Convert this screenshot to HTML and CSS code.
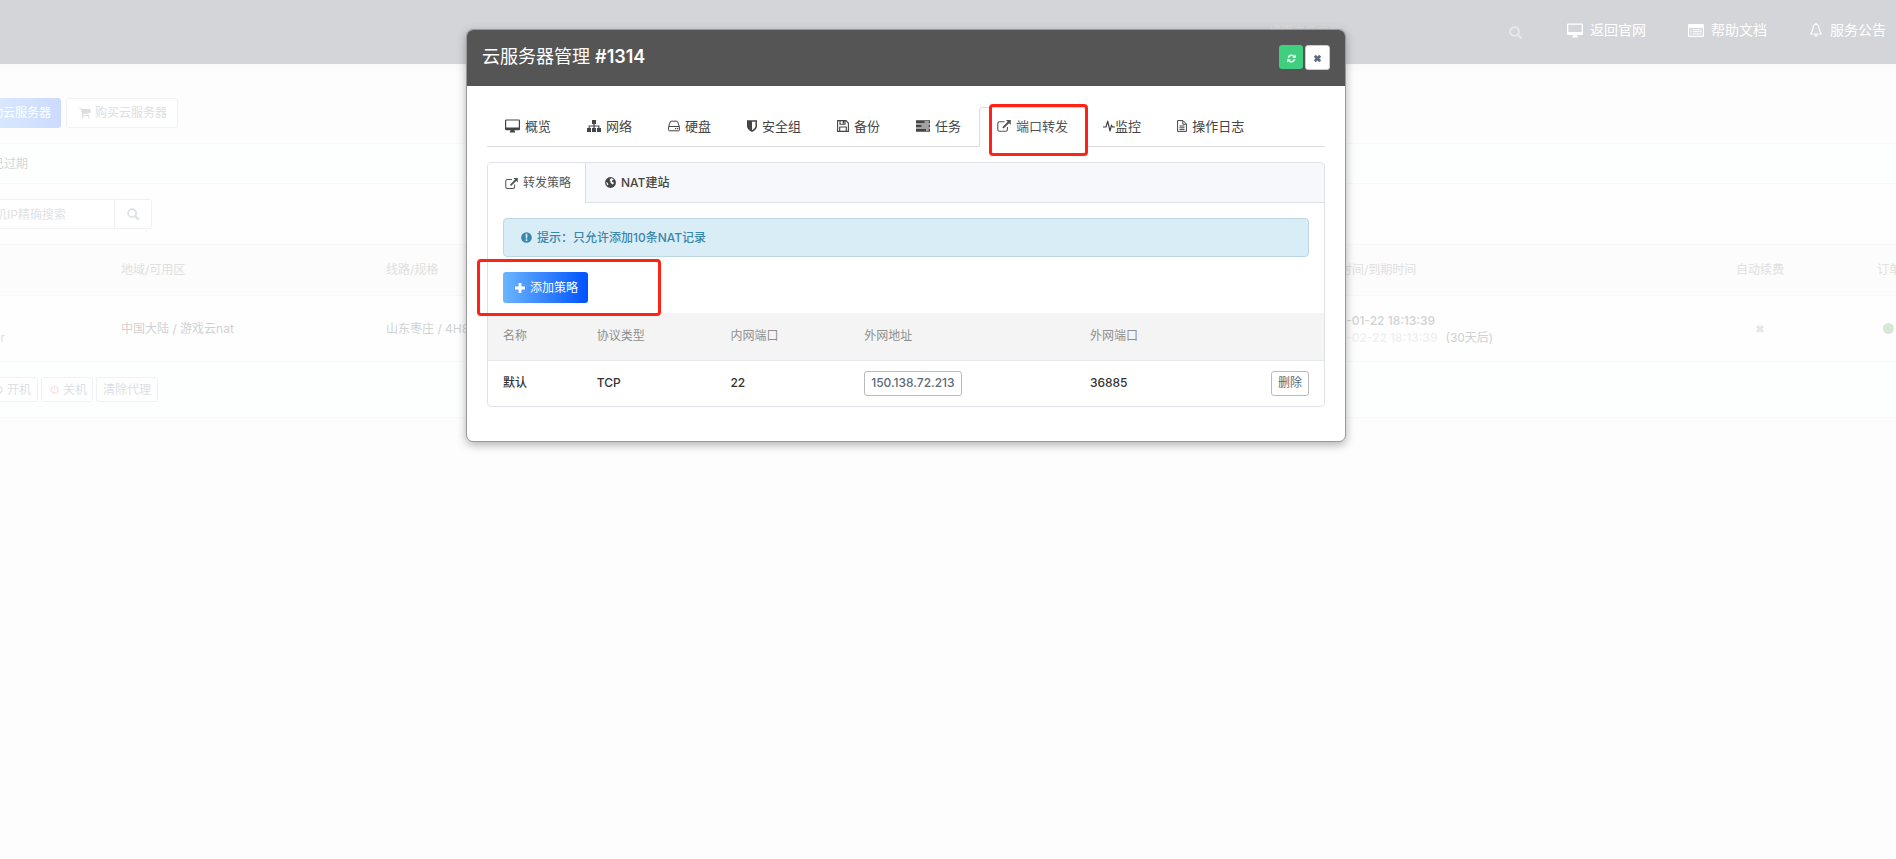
FILE: index.html
```html
<!DOCTYPE html>
<html lang="zh-CN">
<head>
<meta charset="utf-8">
<title>云服务器管理</title>
<link rel="stylesheet" href="styles.css">
</head>
<body>
<svg class="defs" aria-hidden="true">
  <symbol id="i-search" viewBox="0 0 14 14"><circle cx="6" cy="6" r="4.7" fill="none" stroke="currentColor" stroke-width="2"/><path d="M9.3 9.3l3.6 3.6" stroke="currentColor" stroke-width="2.4" stroke-linecap="round"/></symbol>
  <symbol id="i-desktop" viewBox="0 0 16 14"><path fill-rule="evenodd" d="M1.3 0h13.4Q16 0 16 1.3v8.9q0 1.3-1.3 1.3H10q0 .8.8 1.4V14H5.2v-1.100Q6 12.300 6 11.500H1.300Q0 11.500 0 10.200V1.300Q0 0 1.300 0zM1.300 1.200v7.300h13.400V1.200z"/></symbol>
  <symbol id="i-list" viewBox="0 0 16 13"><path fill-rule="evenodd" d="M1.200 0h13.600Q16 0 16 1.200v10.600q0 1.200-1.200 1.200H1.200Q0 13 0 11.800V1.200Q0 0 1.200 0zM1.200 4v7.800h13.600V4z"/><path d="M2.300 5.200h1.200v1H2.300zM4.500 5.200h9.200v1H4.500zM2.300 7.300h1.200v1H2.300zM4.500 7.300h9.200v1H4.500zM2.300 9.400h1.200v1H2.300zM4.500 9.400h9.200v1H4.500z"/></symbol>
  <symbol id="i-bell" viewBox="0 0 14 15"><path d="M7 1.300C4.600 1.600 3.800 3.500 3.800 5.500 3.700 8.500 2.500 10 1 11.800h12C11.500 10 10.300 8.500 10.200 5.500 10.200 3.500 9.400 1.600 7 1.300z" fill="none" stroke="currentColor" stroke-width="1.200" stroke-linejoin="round"/><path d="M5.200 12.500h3.600Q8.500 14.700 7 14.700T5.200 12.500zM6.300 0h1.400v2H6.300z"/></symbol>
  <symbol id="i-cart" viewBox="0 0 13 12"><path d="M0 .5h2.400l.5 1.200H12.500v4.300L4.400 7.200l-.2 1H11.500v1H3L3.300 7 1.900 1.500H0z"/><circle cx="4" cy="10.700" r="1.100"/><circle cx="10.500" cy="10.700" r="1.100"/></symbol>
  <symbol id="i-power" viewBox="0 0 12 12"><path d="M3.300 2.300a4.700 4.700 0 1 0 5.400 0M6 .8v5" fill="none" stroke="currentColor" stroke-width="1.500" stroke-linecap="round"/></symbol>
  <symbol id="i-times" viewBox="0 0 10 10"><path d="M2 2l6 6M8 2L2 8" stroke="currentColor" stroke-width="3"/></symbol>
  <symbol id="i-refresh" viewBox="0 0 12 12"><path d="M1.800 5.200A4.300 4.300 0 0 1 9.500 3.400M10.200 6.800A4.300 4.300 0 0 1 2.500 8.600" fill="none" stroke="currentColor" stroke-width="2"/><path d="M11.600 .6v4.600H7zM.4 11.400V6.800H5z"/></symbol>
  <symbol id="i-sitemap" viewBox="0 0 14 12"><path d="M5 0h4v4H7.600v1.400H12.400V8H14v4h-4V8h1.300V6.500H7.600V8H9v4H5V8h1.400V6.500H2.700V8H4v4H0V8h1.600V5.400H6.400V4H5z"/></symbol>
  <symbol id="i-hdd" viewBox="0 0 12 11"><path d="M.6 6.200L2.300 1.300Q2.500.7 3.200.7h5.600q.7 0 .9.600l1.700 4.900v3.200q0 .9-.9.900h-9q-.9 0-.9-.9zM.8 6h10.400" fill="none" stroke="currentColor" stroke-width="1"/><path d="M7 7.500h1.200v1.200H7zM9 7.500h1.200v1.200H9z"/></symbol>
  <symbol id="i-shield" viewBox="0 0 10 12"><path fill-rule="evenodd" d="M0 .3h10v6Q10 9.500 5 12 0 9.500 0 6.300zM5 1.800v8.500q3.500-1.900 3.500-4V1.800z"/></symbol>
  <symbol id="i-save" viewBox="0 0 12 12"><path d="M.6.600H9L11.400 3v8.400H.6zM2.700 11.200V7h6.600v4.200M3 .8v3.400h5V.8" fill="none" stroke="currentColor" stroke-width="1.100"/><path d="M5.700 1h1.500v2.600H5.700z"/></symbol>
  <symbol id="i-tasks" viewBox="0 0 14 12"><path d="M0 .3h14v3.200H0zM0 4.400h14v3.200H0zM0 8.500h14v3.200H0z"/><path d="M8.500 1.400h4.300v1H8.500zM5.500 5.500h7.300v1H5.500zM10 9.600h2.800v1H10z" fill="#fff"/></symbol>
  <symbol id="i-external" viewBox="0 0 14 12"><path d="M7.500 1.800H2.600Q.8 1.800.8 3.500v6q0 1.800 1.800 1.800h6q1.800 0 1.800-1.800V7" fill="none" stroke="currentColor" stroke-width="1.100"/><path d="M9 0h4.800v4.800L12.100 3.200 6.600 8.600 5.300 7.300 10.700 1.800z"/></symbol>
  <symbol id="i-pulse" viewBox="0 0 12 12"><path d="M0 7h3L4.700 1.200 7 11 8.500 5.200 9.500 7H12" fill="none" stroke="currentColor" stroke-width="1.200" stroke-linejoin="round"/></symbol>
  <symbol id="i-file" viewBox="0 0 10 12"><path d="M.6.600H6L9.400 4v7.400H.6zM5.800.8v3.400h3.400M2.500 6h5M2.500 7.800h5M2.500 9.600h5" fill="none" stroke="currentColor" stroke-width="1"/></symbol>
  <symbol id="i-globe" viewBox="0 0 12 12"><circle cx="6" cy="6" r="5.900"/><path d="M6.500 1.200l2.500 1 .4 1.200-1.400.2-.5 1.500 1.600.5.6 1-.6 1-1.300.6-.5-.8-1.500-1.300.2-1.700-1-.8.500-1.400 1-.4zM1.300 5.500l1.500.9.900 1.700-.6 1.300L2 8.200z" fill="#f6f8fb"/></symbol>
  <symbol id="i-info" viewBox="0 0 12 12"><circle cx="6" cy="6" r="5.800"/><path d="M5 2h2l-.2 5H5.200zM5.100 8h1.800v1.700H5.100z" fill="#d9edf7"/></symbol>
  <symbol id="i-plus" viewBox="0 0 10 10"><path d="M3.600 0h2.800v3.600H10v2.800H6.400V10H3.600V6.400H0V3.600h3.600z"/></symbol>
</svg>

<div class="page">
  <header class="topbar">
    <div class="top-search">
      <input type="text" aria-label="搜索" placeholder="搜索产品文档">
      <svg class="icon s13"><use href="#i-search"/></svg>
    </div>
    <nav class="top-nav">
      <a href="#"><svg class="icon s16"><use href="#i-desktop"/></svg>返回官网</a>
      <a href="#"><svg class="icon s16"><use href="#i-list"/></svg>帮助文档</a>
      <a href="#"><svg class="icon s14"><use href="#i-bell"/></svg>服务公告</a>
    </nav>
  </header>

  <main class="content">
    <div class="toolbar">
      <button class="b-btn b-primary" type="button">启动云服务器</button>
      <button class="b-btn" type="button"><svg class="icon s12"><use href="#i-cart"/></svg>购买云服务器</button>
    </div>
    <div class="filter"><a href="#">已过期</a></div>
    <div class="search-row">
      <input type="text" aria-label="主机IP精确搜索" placeholder="主机IP精确搜索">
      <button type="button" aria-label="查询"><svg class="icon s12"><use href="#i-search"/></svg></button>
    </div>
    <table class="servers">
      <colgroup><col class="c-name"><col class="c-zone"><col class="c-spec"><col class="c-time"><col class="c-renew"><col></colgroup>
      <thead>
        <tr><th>名称</th><th>地域/可用区</th><th>线路/规格</th><th>创建时间/到期时间</th><th>自动续费</th><th>订单状态</th></tr>
      </thead>
      <tbody>
        <tr>
          <td class="host"><span>server</span></td>
          <td>中国大陆 / 游戏云nat</td>
          <td>山东枣庄 / 4H8G</td>
          <td class="time">2024-01-22 18:13:39<br><span class="pale">2024-02-22 18:13:39</span><span class="left">(30天后)</span></td>
          <td class="renew"><svg class="icon s10"><use href="#i-times"/></svg></td>
          <td class="state"><span class="dot"></span></td>
        </tr>
      </tbody>
    </table>
    <div class="actions">
      <button type="button"><svg class="icon s9"><use href="#i-power"/></svg>开机</button>
      <button type="button"><svg class="icon s9 pink"><use href="#i-power"/></svg>关机</button>
      <button type="button">清除代理</button>
    </div>
  </main>
</div>

<div class="overlay">
  <section class="modal" role="dialog" aria-labelledby="dlg-title">
    <header class="modal-head">
      <h1 id="dlg-title">云服务器管理 <b>#1314</b></h1>
      <div class="modal-tools">
        <button class="refresh" type="button" aria-label="刷新"><svg class="icon s9"><use href="#i-refresh"/></svg></button>
        <button class="close" type="button" aria-label="关闭"><svg class="icon s9"><use href="#i-times"/></svg></button>
      </div>
    </header>
    <div class="modal-body">
      <nav class="tabs">
        <a href="#"><svg class="icon s15"><use href="#i-desktop"/></svg>概览</a>
        <a href="#"><svg class="icon s14"><use href="#i-sitemap"/></svg>网络</a>
        <a href="#"><svg class="icon s12"><use href="#i-hdd"/></svg>硬盘</a>
        <a href="#"><svg class="icon s10"><use href="#i-shield"/></svg>安全组</a>
        <a href="#"><svg class="icon s12"><use href="#i-save"/></svg>备份</a>
        <a href="#"><svg class="icon s14"><use href="#i-tasks"/></svg>任务</a>
        <a href="#" class="active"><svg class="icon s14"><use href="#i-external"/></svg>端口转发<span class="mark mark-tab"></span></a>
        <a href="#" class="tight"><svg class="icon s12"><use href="#i-pulse"/></svg>监控</a>
        <a href="#"><svg class="icon s10"><use href="#i-file"/></svg>操作日志</a>
      </nav>
      <div class="card">
        <nav class="card-tabs">
          <a href="#" class="active"><svg class="icon s13"><use href="#i-external"/></svg>转发策略</a>
          <a href="#"><svg class="icon s11"><use href="#i-globe"/></svg>NAT建站</a>
        </nav>
        <div class="alert"><svg class="icon s11"><use href="#i-info"/></svg>提示：只允许添加10条NAT记录</div>
        <div class="add-row">
          <button class="add" type="button"><svg class="icon s10"><use href="#i-plus"/></svg>添加策略</button>
          <span class="mark mark-add"></span>
        </div>
        <table class="rules">
          <colgroup><col class="r-name"><col class="r-proto"><col class="r-in"><col class="r-addr"><col class="r-out"><col></colgroup>
          <thead><tr><th>名称</th><th>协议类型</th><th>内网端口</th><th>外网地址</th><th>外网端口</th><th></th></tr></thead>
          <tbody>
            <tr><td>默认</td><td>TCP</td><td>22</td><td><button class="mini" type="button">150.138.72.213</button></td><td>36885</td><td class="end"><button class="mini" type="button">删除</button></td></tr>
          </tbody>
        </table>
      </div>
    </div>
  </section>
</div>
</body>
</html>
```
FILE: styles.css
```css
* { box-sizing: border-box; }
body {
  margin: 0;
  min-height: 100vh;
  overflow-x: hidden;
  background: #fdfdfd;
  color: #333;
  font: 400 12px/18px Inter, "Noto Sans CJK SC", sans-serif;
}
button, input { font: inherit; color: inherit; }
button { margin: 0; cursor: pointer; white-space: nowrap; }
a { color: inherit; text-decoration: none; }
.defs { position: absolute; width: 0; height: 0; }
.icon { flex: none; fill: currentColor; height: 14px; }
.s9 { width: 9px; height: 9px; }
.s10 { width: 10px; height: 12px; }
.s11 { width: 11px; height: 11px; }
.s12 { width: 12px; height: 12px; }
.s13 { width: 13px; height: 13px; }
.s14 { width: 14px; }
.s15 { width: 15px; }
.s16 { width: 16px; height: 15px; }

/* Page behind the dialog */
.page { overflow: hidden; }
.topbar {
  display: flex;
  justify-content: flex-end;
  align-items: center;
  gap: 45px;
  height: 64px;
  padding: 0 10px 4px 0;
  background: #d4d5d9;
  color: #fff;
  font-size: 14px;
}
.top-search { display: flex; align-items: center; color: #e8e8e8; padding-top: 4px; }
.top-search input { width: 240px; padding: 0; border: 0; background: none; font-size: 12px; }
.top-search input::placeholder { color: #dfdfe2; opacity: 1; }
.top-nav { display: flex; gap: 42px; }
.top-nav a { display: flex; align-items: center; gap: 7px; }
.content { margin-left: -40px; color: #d8d8d8; box-shadow: inset 0 14px 10px -12px #f6f6f6; }
.toolbar { display: flex; gap: 5px; padding: 34px 0 15px; }
.b-btn {
  display: flex;
  align-items: center;
  gap: 4px;
  height: 30px;
  padding: 0 10px 0 12px;
  border: 1px solid #f2f2f2;
  border-radius: 3px;
  background: #fff;
  color: #dcdee2;
}
.b-primary { width: 101px; padding: 0 10px; justify-content: flex-end; border: 0; color: #fff; background: linear-gradient(90deg, #e0f0ff, #ccdbff); }
.filter { height: 41px; padding: 11px 32px; border: solid #f7f9f8; border-width: 1px 0; background: #fcfffe; color: #d6d6d6; }
.search-row { display: flex; padding: 15px 0; background: #fefefe; }
.search-row input { width: 155px; height: 30px; padding: 0 22px; border: 1px solid #f2f2f2; background: #fff; }
.search-row input::placeholder { color: #e2e2e2; opacity: 1; }
.search-row button { width: 38px; margin-left: -1px; border: 1px solid #f0f0f0; border-radius: 0 3px 3px 0; background: #fff; color: #dde0e4; padding: 3px 0 0; }
.servers { width: 100%; table-layout: fixed; border-collapse: collapse; white-space: nowrap; }
.servers th, .servers td { padding: 0; text-align: left; font-weight: 400; }
.servers th { height: 51px; background: #fcfcfc; border: solid #f9f9f9; border-width: 1px 0; color: #e0e0e0; }
.servers td { height: 66px; background: #fefefe; border-bottom: 1px solid #f7f9f8; color: #d2d2d2; line-height: 17px; }
.c-name { width: 161px; }
.c-zone { width: 265px; }
.c-spec { width: 930px; }
.c-time { width: 420px; }
.c-renew { width: 141px; }
.servers .host { padding-top: 17px; color: #e0e0e0; }
.host span { display: block; width: 45px; text-align: right; }
.servers .time { font-weight: 500; }
.pale { color: #f0f0f0; }
.left { margin-left: 8px; font-weight: 400; }
.servers .renew { padding-left: 19px; color: #e4e6e8; }
.renew svg { display: block; }
.state .dot { display: block; width: 11px; height: 11px; margin-left: 6px; border-radius: 50%; background: #d9e7da; }
.actions { display: flex; gap: 3px; padding: 15px 0; background: #fcfffe; border-bottom: 1px solid #f8fafa; }
.actions button { display: flex; align-items: center; justify-content: flex-end; gap: 4px; height: 25px; padding: 0 6px; border: 1px solid #f0f2f2; border-radius: 3px; background: #fff; color: #dcdfe3; }
.actions button:first-child { width: 78px; }
.actions button:nth-child(2) { padding: 0 5px 0 8px; }
.actions .pink { color: #ffdada; }

/* Dialog */
.overlay { position: absolute; top: 29px; left: 0; right: 0; display: flex; justify-content: center; padding-right: 84px; }
.modal { flex: 0 1 880px; border: 1px solid #999; border-radius: 7px; background: #fff; box-shadow: 0 3px 10px rgba(0, 0, 0, .3); }
.modal-head { display: flex; align-items: center; justify-content: space-between; height: 56px; padding: 0 15px 2px; border-radius: 6px 6px 0 0; background: #555; color: #fff; }
.modal-head h1 { margin: 0; font-size: 18px; line-height: 26px; font-weight: 400; }
.modal-head b { font-weight: 600; }
.modal-tools { display: flex; align-items: center; gap: 2px; }
.modal-tools button { display: flex; align-items: center; justify-content: center; width: 24px; height: 24px; padding: 2px 0 0; border: 0; border-radius: 3px; }
.modal-tools .refresh { background: #3fcf7f; color: #fff; }
.modal-tools .close { width: 25px; height: 25px; border: 1px solid #ccc; background: #fff; color: #5b6b7c; }
.modal-body { padding: 21px 20px 34px; }
.tabs { display: flex; border-bottom: 1px solid #ddd; font-size: 13px; color: #444; }
.tabs a { position: relative; display: flex; align-items: center; gap: 5px; height: 40px; padding: 0 17px 2px; margin-bottom: -1px; border: 1px solid transparent; white-space: nowrap; }
.tabs .active { border-color: #ddd #ddd #fff; border-radius: 4px 4px 0 0; background: #fff; color: #555; }
.tabs .tight { gap: 0; padding: 0 17px 2px 16px; }
.mark { position: absolute; border: 3px solid #ff2315; border-radius: 4px; pointer-events: none; z-index: 2; }
.mark-tab { inset: -4px -3px -10px 9px; }
.card { margin-top: 15px; border: 1px solid #dfe3e9; border-radius: 4px; }
.card-tabs { display: flex; height: 40px; background: #f6f8fb; border-bottom: 1px solid #dce1e7; border-radius: 4px 4px 0 0; color: #444; }
.card-tabs a { display: flex; align-items: center; gap: 5px; padding: 0 15px 0 19px; font-weight: 500; }
.card-tabs .active { padding: 0 14px 0 17px; margin-bottom: -1px; border-right: 1px solid #ddd; border-radius: 4px 0 0; background: #fff; color: #555; font-weight: 400; }
.alert { display: flex; align-items: center; gap: 5px; height: 39px; margin: 15px 15px 15px; padding: 0 17px; border: 1px solid #bcd8e2; border-radius: 4px; background: #d9edf7; color: #3a87ad; font-weight: 500; }
.add-row { position: relative; padding: 0 15px 10px; }
.add { display: flex; align-items: center; gap: 5px; height: 31px; padding: 0 10px 0 12px; border: 0; border-radius: 3px; background: linear-gradient(90deg, #6bb6ff, #0052ff); color: #fff; }
.mark-add { left: -11px; top: -13px; width: 184px; height: 57px; }
.rules { width: 100%; table-layout: fixed; border-collapse: collapse; }
.rules th, .rules td { padding: 0; text-align: left; }
.rules th { height: 47px; background: #f4f4f4; color: #8f8f8f; font-weight: 400; }
.rules th:first-child, .rules td:first-child { padding-left: 15px; }
.rules td { height: 46px; border-top: 1px solid #e6e9ee; font-weight: 500; }
.rules .end { padding-right: 15px; text-align: right; }
.r-name { width: 13%; }
.r-proto { width: 16%; }
.r-in { width: 16%; }
.r-addr { width: 27%; }
.r-out { width: 14%; }
.mini { height: 25px; padding: 0 6px; border: 1px solid #bbb; border-radius: 3px; background: #fff; color: #5b6b7c; font-weight: 500; }
.end .mini { font-weight: 400; }
```
